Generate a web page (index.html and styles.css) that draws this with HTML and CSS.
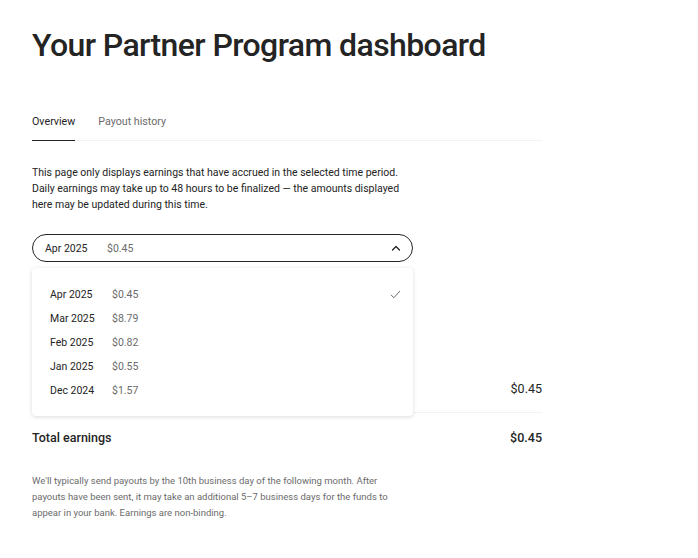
FILE: index.html
```html
<!DOCTYPE html>
<html>
<head>
  <meta charset="UTF-8">
  <title>Partner Program</title>
  <link rel="stylesheet" href="styles.css">
</head>
<body>
  <div class="page">
    <h1>Your Partner Program dashboard</h1>

    <div class="tabs">
      <span class="tab active">Overview</span>
      <span class="tab">Payout history</span>
    </div>

    <p class="intro">
      This page only displays earnings that have accrued in the selected time period.<br>
      Daily earnings may take up to 48 hours to be finalized — the amounts displayed<br>
      here may be updated during this time.
    </p>

    <div class="picker">
      <div class="select">
        <span class="month">Apr 2025</span>
        <span class="amount">$0.45</span>
        <svg class="chevron" width="10" height="6" viewBox="0 0 10 6">
          <path d="M1.5 5l3.5-3.5 3.5 3.5" fill="none" stroke="#242424" stroke-width="1.3" stroke-linecap="round" stroke-linejoin="round"/>
        </svg>
      </div>

      <ul class="menu">
        <li class="option">
          <span class="month">Apr 2025</span>
          <span class="amount">$0.45</span>
          <svg class="check" width="11" height="9" viewBox="0 0 11 9">
            <path d="M1 4.8l2.8 3L10 1" fill="none" stroke="#6b6b6b" stroke-width="1"/>
          </svg>
        </li>
        <li class="option"><span class="month">Mar 2025</span><span class="amount">$8.79</span></li>
        <li class="option"><span class="month">Feb 2025</span><span class="amount">$0.82</span></li>
        <li class="option"><span class="month">Jan 2025</span><span class="amount">$0.55</span></li>
        <li class="option"><span class="month">Dec 2024</span><span class="amount">$1.57</span></li>
      </ul>
    </div>

    <div class="breakdown">
      <div class="row">
        <span></span>
        <span>$0.45</span>
      </div>
      <div class="row total">
        <span>Total earnings</span>
        <span>$0.45</span>
      </div>
    </div>

    <p class="note">
      We'll typically send payouts by the 10th business day of the following month. After<br>
      payouts have been sent, it may take an additional 5–7 business days for the funds to<br>
      appear in your bank. Earnings are non-binding.
    </p>
  </div>
</body>
</html>
```

FILE: styles.css
```css
body {
  margin: 0;
  background: #fff;
  color: #242424;
  font-family: Roboto, "Liberation Sans", sans-serif;
}

.page {
  width: 510px;
  padding: 25px 32px 0;
}

h1 {
  font-size: 32px;
  font-weight: 500;
  letter-spacing: -0.6px;
  line-height: 40px;
  margin: 0 0 46px;
}

.tabs {
  display: flex;
  gap: 23px;
  border-bottom: 1px solid #f2f2f2;
  font-size: 10.7px;
}

.tab {
  padding: 4px 0 12px;
  color: #6b6b6b;
}

.tab.active {
  color: #242424;
  border-bottom: 1px solid #242424;
  margin-bottom: -1px;
}

.intro {
  font-size: 10.5px;
  line-height: 16px;
  margin: 24px 0 21px;
}

.picker {
  position: relative;
  width: 381px;
}

.select {
  display: flex;
  align-items: center;
  height: 26px;
  padding: 0 11px 0 12px;
  border: 1px solid #242424;
  border-radius: 14px;
  font-size: 10.5px;
}

.month {
  width: 62px;
}

.amount {
  color: #6b6b6b;
}

.chevron {
  margin-left: auto;
}

.menu {
  position: absolute;
  top: 34px;
  left: 0;
  right: 0;
  margin: 0;
  padding: 14px 0 14px;
  list-style: none;
  background: #fff;
  border-radius: 4px;
  box-shadow: 0 1px 4px rgba(0, 0, 0, 0.15);
  z-index: 2;
}

.option {
  display: flex;
  align-items: center;
  height: 24px;
  padding: 0 12px 0 18px;
  font-size: 10.5px;
}

.check {
  margin-left: auto;
}

.breakdown {
  margin-top: 102px;
}

.row {
  display: flex;
  justify-content: space-between;
  align-items: center;
  height: 48px;
  font-size: 12.5px;
  border-bottom: 1px solid #f2f2f2;
}

.row.total {
  font-weight: 500;
  border-bottom: none;
}

.note {
  font-size: 9.5px;
  line-height: 16px;
  color: #6b6b6b;
  margin: 12px 0 0;
}
```
